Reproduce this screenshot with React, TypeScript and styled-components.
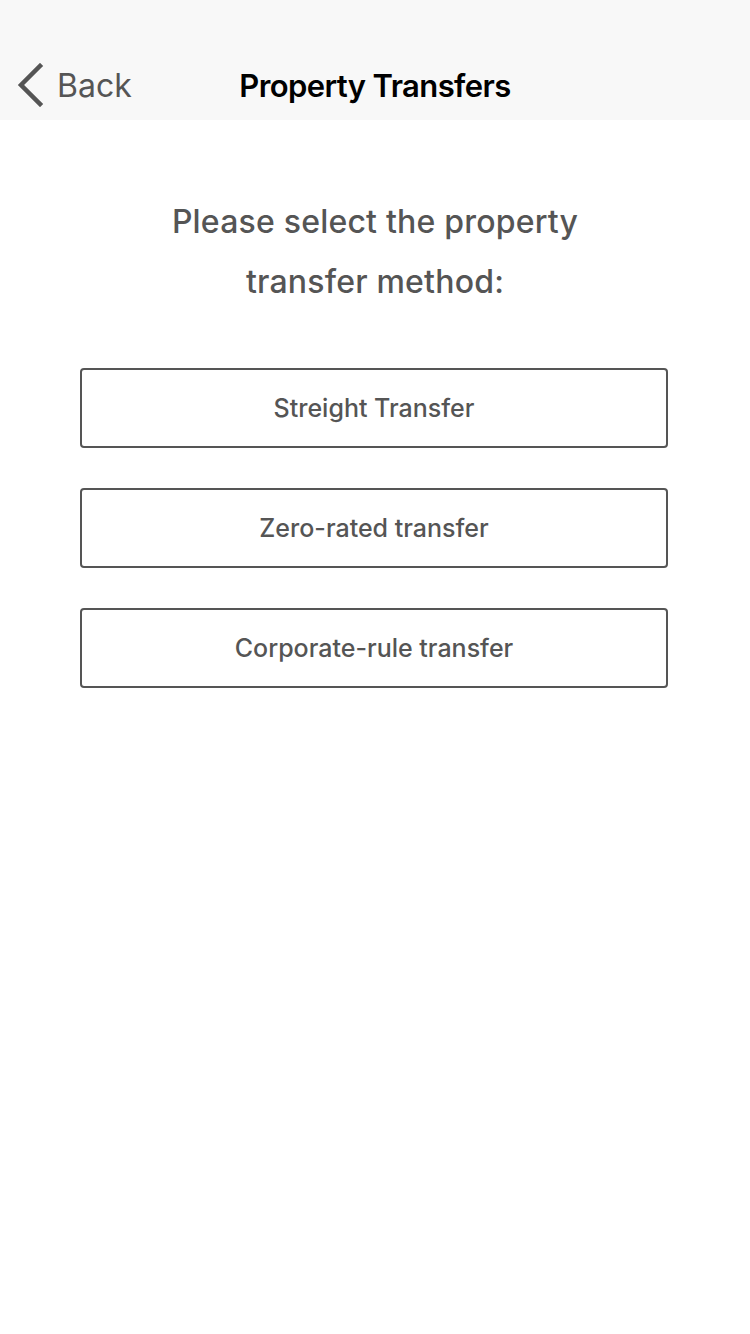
import React from "react";
import styled, { createGlobalStyle } from "styled-components";

const GlobalStyle = createGlobalStyle`
  html, body {
    margin: 0;
    padding: 0;
    background: #ffffff;
    font-family: Inter, "Liberation Sans", Arial, sans-serif;
  }
`;

const Page = styled.div`
  width: 750px;
  min-height: 1334px;
  background: #ffffff;
`;

const NavBar = styled.header`
  height: 120px;
  background: #f8f8f8;
  display: grid;
  grid-template-columns: 1fr auto 1fr;
  align-items: center;
  padding-top: 50px;
  box-sizing: border-box;
`;

const BackButton = styled.button`
  display: flex;
  align-items: center;
  gap: 12px;
  padding: 0 0 0 17px;
  border: none;
  background: none;
  color: #555555;
  font-family: inherit;
  font-size: 32px;
  cursor: pointer;
  justify-self: start;
`;

const Title = styled.h1`
  margin: 0;
  font-size: 31px;
  font-weight: 600;
  color: #000000;
  letter-spacing: -0.6px;
`;

const Content = styled.main`
  display: flex;
  flex-direction: column;
  align-items: center;
  padding-top: 72px;
`;

const Prompt = styled.p`
  margin: 0 0 56px;
  width: 500px;
  text-align: center;
  font-size: 32px;
  line-height: 60px;
  font-weight: 500;
  letter-spacing: 0.2px;
  color: #555555;
`;

const Options = styled.div`
  display: flex;
  flex-direction: column;
  gap: 40px;
  padding-right: 2px;
`;

const OptionButton = styled.button`
  width: 588px;
  height: 80px;
  border: 2px solid #555555;
  border-radius: 4px;
  background: #ffffff;
  color: #555555;
  font-family: inherit;
  font-size: 25px;
  font-weight: 450;
  cursor: pointer;
`;

const ChevronLeft = () => (
  <svg width="28" height="44" viewBox="0 0 28 44" fill="none">
    <path d="M23 3 L4 22 L23 41" stroke="#555555" strokeWidth="4.5" strokeLinecap="square" />
  </svg>
);

const methods = ["Streight Transfer", "Zero-rated transfer", "Corporate-rule transfer"];

export default function App() {
  return (
    <Page>
      <GlobalStyle />
      <NavBar>
        <BackButton>
          <ChevronLeft />
          Back
        </BackButton>
        <Title>Property Transfers</Title>
        <div />
      </NavBar>
      <Content>
        <Prompt>Please select the property transfer method:</Prompt>
        <Options>
          {methods.map((m) => (
            <OptionButton key={m}>{m}</OptionButton>
          ))}
        </Options>
      </Content>
    </Page>
  );
}
